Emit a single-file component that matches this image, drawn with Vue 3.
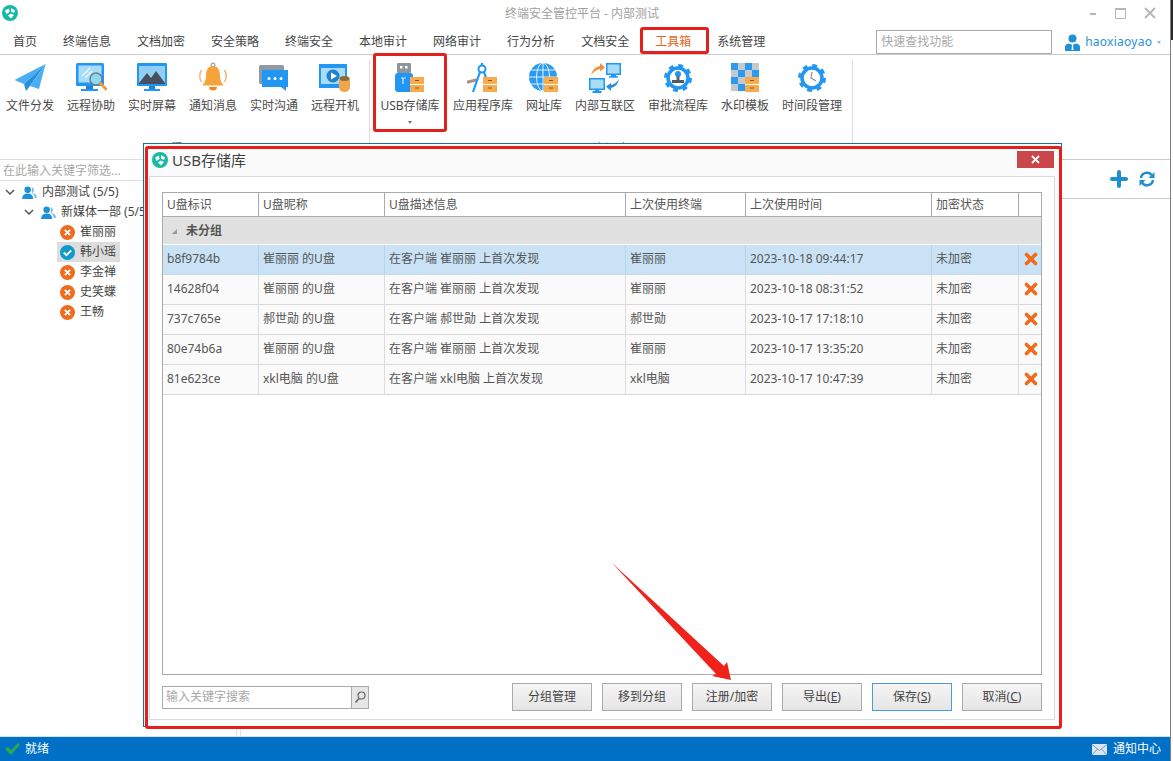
<script setup>
const tabs = ['首页', '终端信息', '文档加密', '安全策略', '终端安全', '本地审计', '网络审计', '行为分析', '文档安全', '工具箱', '系统管理']

const groupA = [
  { name: '文件分发', icon: 'plane' },
  { name: '远程协助', icon: 'assist' },
  { name: '实时屏幕', icon: 'screen' },
  { name: '通知消息', icon: 'bell' },
  { name: '实时沟通', icon: 'chat' },
  { name: '远程开机', icon: 'video' }
]
const groupB = [
  { name: 'USB存储库', icon: 'usb', drawer: true, more: true },
  { name: '应用程序库', icon: 'compass', drawer: true },
  { name: '网址库', icon: 'globe', drawer: true },
  { name: '内部互联区', icon: 'net' },
  { name: '审批流程库', icon: 'stamp' },
  { name: '水印模板', icon: 'checker', drawer: true },
  { name: '时间段管理', icon: 'clock' }
]

const people = [
  { name: '崔丽丽', ok: false },
  { name: '韩小瑶', ok: true },
  { name: '李金禅', ok: false },
  { name: '史笑蝶', ok: false },
  { name: '王畅', ok: false }
]

const columns = ['U盘标识', 'U盘昵称', 'U盘描述信息', '上次使用终端', '上次使用时间', '加密状态', '']
const rows = [
  { id: 'b8f9784b', user: '崔丽丽', time: '2023-10-18 09:44:17' },
  { id: '14628f04', user: '崔丽丽', time: '2023-10-18 08:31:52' },
  { id: '737c765e', user: '郝世勋', time: '2023-10-17 17:18:10' },
  { id: '80e74b6a', user: '崔丽丽', time: '2023-10-17 13:35:20' },
  { id: '81e623ce', user: 'xkl电脑', time: '2023-10-17 10:47:39' }
]
const checkerCells = []
for (let r = 0; r < 4; r++) {
  for (let c = 0; c < 4; c++) {
    checkerCells.push({ x: 2 + c * 7, y: 1 + r * 7, blue: (r + c) % 2 === 0 })
  }
}
</script>

<template>
  <div class="screen">
    <div class="win">
      <div class="titlebar">
        <svg class="logo" viewBox="0 0 16 16">
          <circle cx="8" cy="8" r="8" fill="#19b9a5" />
          <path d="M3 5.500 7 3.500 7.500 7 4.500 9ZM9 3 13 5.500 12 8 9 6.500ZM6 10.500 9 8.500 12 10 9 13.500Z" fill="#fff" />
        </svg>
        <span class="apptitle">终端安全管控平台 - 内部测试</span>
        <div class="winctl">
          <svg width="70" height="14" viewBox="0 0 70 14">
            <path d="M0 8H6" stroke="#b5b5b5" stroke-width="2" />
            <path d="M25.500 2.500H35.500V12.500H25.500Z" fill="none" stroke="#b5b5b5" />
            <path d="M25 3H36" stroke="#b5b5b5" stroke-width="2" />
            <path d="M55 2 65 12M65 2 55 12" stroke="#b5b5b5" stroke-width="1.800" />
          </svg>
        </div>
      </div>

      <div class="tabbar">
        <span v-for="t in tabs" :key="t" class="tab" :class="{ active: t === '工具箱' }">{{ t }}</span>
        <div class="quick">快速查找功能</div>
        <div class="user">
          <svg width="15" height="17" viewBox="0 0 15 17">
            <circle cx="7.500" cy="4.500" r="4" fill="#1f8fd8" />
            <path d="M0 17V13Q0 10 4 9.500L7.500 11 11 9.500Q15 10 15 13V17Z" fill="#1f8fd8" />
            <path d="M7 11H8L8.500 16H6.500Z" fill="#fff" />
          </svg>
          <span>haoxiaoyao</span>
          <i class="caret"></i>
        </div>
      </div>

      <div class="ribbon">
        <div v-for="(group, gi) in [groupA, groupB]" :key="gi" class="rgroup" :class="'rgroup' + gi">
          <div class="ritems">
            <div v-for="it in group" :key="it.name" class="ritem" :class="{ wide: it.more }">
              <svg class="ricon" viewBox="0 0 32 32">
                <template v-if="it.icon === 'plane'">
                  <path d="M31.500 2 .5 18 10 22Z" fill="#49aef2" />
                  <path d="M31.500 2 10 22 12 29 16 24Z" fill="#2690da" />
                  <path d="M31.500 2 16 24 25 27Z" fill="#49aef2" />
                </template>
                <template v-else-if="it.icon === 'assist'">
                  <rect x="1" y="1" width="28" height="23" rx="1.500" fill="#2196f3" />
                  <rect x="3.500" y="3.500" width="23" height="17" fill="#a9dcf7" />
                  <path d="M7 14 15 6M10 16 17 9" stroke="#e4f5fd" stroke-width="1.500" />
                  <rect x="11" y="24" width="7" height="3" fill="#1d82d2" />
                  <rect x="6" y="27" width="17" height="2" fill="#2196f3" />
                  <circle cx="21" cy="17" r="6" fill="#8fd8ee" stroke="#6a7f8c" stroke-width="1.500" />
                  <path d="M25.500 21.500 31 27" stroke="#f1974a" stroke-width="3" stroke-linecap="round" />
                </template>
                <template v-else-if="it.icon === 'screen'">
                  <rect x="1" y="1" width="30" height="23" rx="1" fill="#2196f3" />
                  <rect x="3" y="4" width="26" height="18" fill="#8fd0f2" />
                  <path d="M3 21 11 11 15 16 20 9 29 21V22H3Z" fill="#46505e" />
                  <rect x="13" y="24" width="6" height="3" fill="#1d82d2" />
                  <rect x="8" y="27" width="16" height="2" fill="#2196f3" />
                </template>
                <template v-else-if="it.icon === 'bell'">
                  <circle cx="16" cy="3" r="2" fill="none" stroke="#8a8a8a" />
                  <path d="M16 4C10.500 4 9 9 9 14 9 19 7 21 5.500 23.500H26.500C25 21 23 19 23 14 23 9 21.500 4 16 4Z" fill="#f7a33c" />
                  <path d="M12 25H20A4 3.500 0 0 1 12 25Z" fill="#f08a1d" />
                  <path d="M4.500 8Q1 14 4.500 20M27.500 8Q31 14 27.500 20" fill="none" stroke="#f3b77c" stroke-width="1.500" />
                </template>
                <template v-else-if="it.icon === 'chat'">
                  <rect x="1" y="3" width="25" height="19" rx="1.500" fill="#8f9aa3" />
                  <path d="M4 8H30V25H28V29L23 25H4Z" fill="#2196f3" />
                  <circle cx="11" cy="16.500" r="1.500" fill="#fff" />
                  <circle cx="17" cy="16.500" r="1.500" fill="#fff" />
                  <circle cx="23" cy="16.500" r="1.500" fill="#fff" />
                </template>
                <template v-else-if="it.icon === 'video'">
                  <rect x="0" y="2" width="28" height="24" fill="#2196f3" />
                  <rect x="2" y="6" width="24" height="16" fill="#a9dcf7" />
                  <circle cx="14" cy="14" r="6.500" fill="#1d82d2" />
                  <path d="M12 10.500 18 14 12 17.500Z" fill="#fff" />
                  <rect x="20" y="14" width="11" height="16" rx="5" fill="#f2a54b" />
                  <ellipse cx="25.500" cy="16.500" rx="5" ry="2.500" fill="#8c6a3e" />
                </template>
                <template v-else-if="it.icon === 'usb'">
                  <rect x="3" y="1" width="14" height="10" rx="1" fill="#8e969c" />
                  <rect x="6" y="4" width="2.500" height="2.500" fill="#fff" />
                  <rect x="11" y="4" width="2.500" height="2.500" fill="#fff" />
                  <path d="M1 14Q1 11 4 11H16Q19 11 19 14V30H4Q1 30 1 27Z" fill="#2196f3" />
                  <path d="M7 16H12M9 16V22" stroke="#cfeafb" stroke-width="1.200" />
                </template>
                <template v-else-if="it.icon === 'compass'">
                  <path d="M1 20 9 18" stroke="#a98f90" stroke-width="3" stroke-linecap="round" />
                  <circle cx="15" cy="7" r="3.500" fill="none" stroke="#2196f3" stroke-width="2" />
                  <path d="M15 1V4M13 10 6 30M17 10 22 24" stroke="#2196f3" stroke-width="2.200" />
                </template>
                <template v-else-if="it.icon === 'globe'">
                  <circle cx="15" cy="15" r="14" fill="#2b9af0" />
                  <path d="M1 15H29M3 8H27M3 22H27M15 1V29" stroke="#e2f3fd" stroke-width="1" />
                  <ellipse cx="15" cy="15" rx="6.500" ry="14" fill="none" stroke="#e2f3fd" />
                </template>
                <template v-else-if="it.icon === 'net'">
                  <rect x="17" y="1" width="15" height="12" fill="#2196f3" />
                  <rect x="18.500" y="2.500" width="12" height="9" fill="#a9dcf7" />
                  <path d="M22 13H27V15H22Z" fill="#2196f3" />
                  <path d="M20 15H29" stroke="#2196f3" stroke-width="1.500" />
                  <rect x="0" y="16" width="16" height="12" fill="#2196f3" />
                  <rect x="1.500" y="17.500" width="13" height="9" fill="#a9dcf7" />
                  <path d="M3.500 30H12.500M6 28H10" stroke="#2196f3" stroke-width="2" />
                  <path d="M2 13Q4 5 11 4V1L16 5.500 11 9.500V7Q6 8 2 13Z" fill="#f1913a" />
                  <path d="M30 17Q29 24 22 26V29L17 24.500 22 21V23Q27 22 30 17Z" fill="#2b8fdc" />
                </template>
                <template v-else-if="it.icon === 'stamp'">
                  <circle cx="16" cy="16" r="12.500" fill="none" stroke="#2196f3" stroke-width="3" stroke-dasharray="4.800 5" />
                  <circle cx="16" cy="16" r="10" fill="#fff" stroke="#2196f3" stroke-width="3.500" />
                  <circle cx="16" cy="12" r="3" fill="#2196f3" />
                  <path d="M14.500 14H17.500V18H14.500Z" fill="#5a6b78" />
                  <rect x="10" y="18" width="12" height="3" fill="#4a5a68" />
                </template>
                <template v-else-if="it.icon === 'checker'">
                  <rect
                    v-for="(cell, ci) in checkerCells"
                    :key="ci"
                    :x="cell.x"
                    :y="cell.y"
                    width="7"
                    height="7"
                    :fill="cell.blue ? '#2b9af0' : '#c6c9cc'"
                  />
                </template>
                <template v-else-if="it.icon === 'clock'">
                  <circle cx="16" cy="16" r="12.500" fill="none" stroke="#2196f3" stroke-width="3" stroke-dasharray="4.800 5" />
                  <circle cx="16" cy="16" r="10" fill="#fff" stroke="#2196f3" stroke-width="3.500" />
                  <path d="M16 10 15 16 20 19" fill="none" stroke="#8a8f94" stroke-width="1.200" />
                </template>
                <g v-if="it.drawer">
                  <rect x="16" y="15" width="14" height="15" fill="#f5ab4e" />
                  <path d="M16 22.500H30" stroke="#fff" />
                  <path d="M21 18.500H25M21 26H25" stroke="#8a5a20" stroke-width="1.200" />
                </g>
              </svg>
              <span class="rlabel">{{ it.name }}</span>
              <i v-if="it.more" class="caret dark"></i>
            </div>
          </div>
          <div class="glabel">{{ gi === 0 ? '远程工具' : '资源库' }}</div>
        </div>
      </div>

      <div class="main">
        <div class="tree">
          <div class="filter">在此输入关键字筛选...</div>
          <div class="node lvl0">
            <svg class="chev" viewBox="0 0 10 6"><path d="M1 1 5 5 9 1" fill="none" stroke="#555" stroke-width="1.500" /></svg>
            <svg class="grp" viewBox="0 0 16 14"><circle cx="6" cy="4" r="3.500" fill="#1f8fd8" /><path d="M0 14Q0 8 6 8 12 8 12 14Z" fill="#1f8fd8" /><path d="M10.500 1.200A3.500 3.500 0 0 1 11 7.500Q16 8 16 13H13.500Q13.500 9 10.500 7.500Z" fill="#7cbce8" /></svg>
            <span>内部测试 (5/5)</span>
          </div>
          <div class="node lvl1">
            <svg class="chev" viewBox="0 0 10 6"><path d="M1 1 5 5 9 1" fill="none" stroke="#555" stroke-width="1.500" /></svg>
            <svg class="grp" viewBox="0 0 16 14"><circle cx="6" cy="4" r="3.500" fill="#1f8fd8" /><path d="M0 14Q0 8 6 8 12 8 12 14Z" fill="#1f8fd8" /><path d="M10.500 1.200A3.500 3.500 0 0 1 11 7.500Q16 8 16 13H13.500Q13.500 9 10.500 7.500Z" fill="#7cbce8" /></svg>
            <span>新媒体一部 (5/5)</span>
          </div>
          <div v-for="p in people" :key="p.name" class="node lvl2">
            <div class="person" :class="{ sel: p.ok }">
              <svg width="15" height="15" viewBox="0 0 14 14">
                <circle cx="7" cy="7" r="7" :fill="p.ok ? '#0f9ac9' : '#f26a1b'" />
                <path v-if="p.ok" d="M3.500 7 6 9.500 10.500 5" fill="none" stroke="#fff" stroke-width="1.800" />
                <path v-else d="M4.500 4.500 9.500 9.500M9.500 4.500 4.500 9.500" stroke="#fff" stroke-width="1.800" />
              </svg>
              <span>{{ p.name }}</span>
            </div>
          </div>
        </div>
        <div class="content">
          <div class="chead">
            <svg width="18" height="18" viewBox="0 0 18 18"><path d="M9 2V16M2 9H16" stroke="#1f8fd0" stroke-width="4" stroke-linecap="round" /></svg>
            <svg width="16" height="16" viewBox="0 0 16 16">
              <path d="M2 7A6 6 0 0 1 13 4.500" fill="none" stroke="#1f8fd0" stroke-width="2.400" />
              <path d="M15.500 1V7H9.500Z" fill="#1f8fd0" />
              <path d="M14 9A6 6 0 0 1 3 11.500" fill="none" stroke="#1f8fd0" stroke-width="2.400" />
              <path d="M.5 15V9H6.500Z" fill="#1f8fd0" />
            </svg>
          </div>
        </div>
      </div>

      <div class="status">
        <svg width="15" height="12" viewBox="0 0 15 12"><path d="M0 6 3 4 6 7 13 0 15 1.500 6 12Z" fill="#2fa84f" /></svg>
        <span class="ready">就绪</span>
        <svg class="mail" width="15" height="11" viewBox="0 0 15 11">
          <rect width="15" height="11" fill="#d9e6f0" />
          <path d="M0 .5 7.500 6.500 15 .5M0 11 5.500 5M15 11 9.500 5" fill="none" stroke="#7f9db5" />
        </svg>
        <span>通知中心</span>
      </div>
    </div>
    <div class="edge"><i></i></div>

    <div class="dialog">
      <div class="dhead">
        <svg class="dlogo" viewBox="0 0 16 16">
          <circle cx="8" cy="8" r="8" fill="#19b9a5" />
          <path d="M3 5.500 7 3.500 7.500 7 4.500 9ZM9 3 13 5.500 12 8 9 6.500ZM6 10.500 9 8.500 12 10 9 13.500Z" fill="#fff" />
        </svg>
        <span class="dtitle">USB存储库</span>
        <div class="dclose">
          <svg width="9" height="9" viewBox="0 0 9 9"><path d="M1 1 8 8M8 1 1 8" stroke="#fff" stroke-width="1.800" /></svg>
        </div>
      </div>
      <div class="dbody">
        <div class="frame">
          <table>
            <colgroup>
              <col style="width: 96px" />
              <col style="width: 126px" />
              <col style="width: 241px" />
              <col style="width: 120px" />
              <col style="width: 186px" />
              <col style="width: 87px" />
              <col style="width: 22px" />
            </colgroup>
            <thead>
              <tr>
                <th v-for="(c, i) in columns" :key="i">{{ c }}</th>
              </tr>
            </thead>
            <tbody>
              <tr class="grouprow">
                <td colspan="7"><i class="tri"></i>未分组</td>
              </tr>
              <tr v-for="(r, i) in rows" :key="r.id" :class="{ first: i === 0 }">
                <td>{{ r.id }}</td>
                <td>{{ r.user }} 的U盘</td>
                <td>在客户端 {{ r.user }} 上首次发现</td>
                <td>{{ r.user }}</td>
                <td>{{ r.time }}</td>
                <td>未加密</td>
                <td class="del">
                  <svg width="14" height="14" viewBox="0 0 14 14"><path d="M2.500 2.500 11.500 11.500M11.500 2.500 2.500 11.500" stroke="#f26a1b" stroke-width="3.600" stroke-linecap="round" /></svg>
                </td>
              </tr>
            </tbody>
          </table>
        </div>
        <div class="dfoot">
          <div class="search">
            <span class="ph">输入关键字搜索</span>
            <div class="sbtn">
              <svg width="12" height="13" viewBox="0 0 12 13"><circle cx="7.500" cy="4.500" r="3.500" fill="none" stroke="#666" stroke-width="1.200" /><path d="M5 7.500 1.500 11.500" stroke="#666" stroke-width="1.600" /></svg>
            </div>
          </div>
          <div class="btns">
            <button type="button">分组管理</button>
            <button type="button">移到分组</button>
            <button type="button">注册/加密</button>
            <button type="button">导出(<u>E</u>)</button>
            <button type="button" class="primary">保存(<u>S</u>)</button>
            <button type="button">取消(<u>C</u>)</button>
          </div>
        </div>
      </div>
    </div>

    <!-- 截图上的红色标注 -->
    <div class="mark mark-tab"></div>
    <div class="mark mark-usb"></div>
    <div class="mark mark-dialog"></div>
    <svg class="arrow" width="1173" height="761" viewBox="0 0 1173 761">
      <path d="M612 563 724 666 727 662 731 680 712 676 716 674Z" fill="#f0231c" />
    </svg>
  </div>
</template>

<style scoped>
.screen {
  position: relative;
  width: 1173px;
  height: 761px;
  display: flex;
  overflow: hidden;
  background: #fff;
  color: #555;
  font-family: "Noto Sans", "Noto Sans CJK SC", sans-serif;
  font-size: 12px;
  line-height: 16px;
}
.win {
  flex: 1;
  display: flex;
  flex-direction: column;
  min-width: 0;
}
.edge {
  width: 3px;
  background: #fff;
  border-left: 1px solid #808080;
  box-sizing: border-box;
}
.edge i {
  display: block;
  height: 40px;
  background: #2a2a2a;
}

.titlebar {
  height: 27px;
  position: relative;
  display: flex;
  align-items: center;
  justify-content: center;
  flex: none;
}
.logo {
  position: absolute;
  left: 2px;
  top: 5px;
  width: 16px;
  height: 16px;
}
.apptitle {
  color: #a0a0a0;
  position: relative;
  left: -3px;
}
.winctl {
  position: absolute;
  right: 10px;
  top: 6px;
  line-height: 0;
}

.tabbar {
  height: 28px;
  flex: none;
  display: flex;
  align-items: center;
  border-bottom: 1px solid #ccc;
  box-sizing: border-box;
  padding-top: 3px;
  white-space: nowrap;
}
.tab {
  flex: none;
  padding: 0 13px;
  color: #444;
}
.tab.active {
  color: #e8641b;
}
.quick {
  flex: none;
  margin-left: 98px;
  width: 176px;
  height: 24px;
  box-sizing: border-box;
  border: 1px solid #aaa;
  padding: 3px 4px;
  color: #a8a8a8;
}
.user {
  flex: none;
  margin-left: 13px;
  display: flex;
  align-items: center;
  gap: 5px;
  color: #2a8fd8;
  font-size: 12px;
  letter-spacing: 0.25px;
}
.caret {
  display: inline-block;
  width: 0;
  height: 0;
  border: 2.500px solid transparent;
  border-top: 3px solid #7cbce8;
  border-bottom: 0;
}
.caret.dark {
  border-top-color: #777;
  margin-top: 7px;
}

.ribbon {
  height: 104px;
  flex: none;
  display: flex;
}
.rgroup {
  display: flex;
  flex-direction: column;
  align-items: stretch;
  margin-top: 5px;
  border-right: 1px solid #ddd;
  box-sizing: border-box;
}
.rgroup0 {
  width: 370px;
  padding-left: 6px;
}
.rgroup1 {
  width: 483px;
  padding-left: 10px;
}
.ritems {
  display: flex;
  gap: 13px;
  height: 81px;
}
.ritem {
  display: flex;
  flex-direction: column;
  align-items: center;
}
.ritem.wide {
  min-width: 60px;
}
.ricon {
  width: 32px;
  height: 32px;
  margin-top: 2px;
}
.rlabel {
  margin-top: 4px;
  white-space: nowrap;
  color: #4a4a4a;
}
/* 组名大部分被对话框盖住，只露出顶部几个像素 */
.glabel {
  height: 4px;
  overflow: hidden;
  text-align: center;
  color: #666;
  padding-right: 10px;
}

.main {
  flex: 1;
  display: flex;
  gap: 4px;
  min-height: 0;
}
.tree {
  width: 236px;
  flex: none;
  border-right: 1px solid #e2e2e2;
  box-sizing: content-box;
  margin-right: -1px;
}
.filter {
  height: 22px;
  box-sizing: border-box;
  border-top: 1px solid #ddd;
  border-bottom: 1px solid #ddd;
  padding: 3px 3px;
  color: #a8a8a8;
  margin-bottom: 1px;
}
.node {
  height: 20px;
  display: flex;
  align-items: center;
  white-space: nowrap;
  color: #444;
}
.lvl0 {
  padding-left: 5px;
}
.lvl1 {
  padding-left: 24px;
}
.lvl2 {
  padding-left: 57px;
}
.chev {
  width: 10px;
  height: 6px;
  margin-right: 7px;
}
.grp {
  width: 15px;
  height: 13px;
  margin-right: 5px;
}
.person {
  display: flex;
  align-items: center;
  gap: 5px;
  padding: 0 3px;
  height: 20px;
  width: 63px;
  box-sizing: border-box;
}
.person.sel {
  background: #ddd;
}
.content {
  flex: 1;
  border-left: 1px solid #e2e2e2;
}
.chead {
  height: 40px;
  box-sizing: border-box;
  border-top: 1px solid #ccc;
  border-bottom: 1px solid #ccc;
  display: flex;
  align-items: center;
  justify-content: flex-end;
  gap: 11px;
  padding-right: 15px;
}

.status {
  height: 25px;
  flex: none;
  background: #0070c6;
  border-top: 1px solid #cfe3f3;
  box-sizing: border-box;
  display: flex;
  align-items: center;
  padding: 0 9px 0 5px;
  color: #fff;
}
.ready {
  margin-left: 5px;
  flex: 1;
}
.mail {
  margin-right: 6px;
}

.dialog {
  position: absolute;
  left: 143px;
  top: 143px;
  width: 919px;
  height: 584px;
  box-sizing: border-box;
  border: 1px solid #1a6f9e;
  background: #fbfbfb;
  display: flex;
  flex-direction: column;
}
.dhead {
  height: 32px;
  flex: none;
  position: relative;
  display: flex;
  align-items: center;
  padding-left: 8px;
}
.dlogo {
  width: 16px;
  height: 16px;
}
.dtitle {
  margin-left: 4px;
  font-size: 15px;
  color: #444;
}
.dclose {
  position: absolute;
  right: 7px;
  top: 7px;
  width: 37px;
  height: 17px;
  background: #c9474a;
  display: flex;
  align-items: center;
  justify-content: center;
}
.dbody {
  flex: 1;
  margin: 0 6px 6px 5px;
  border: 1px solid #d5dbdf;
  background: #fff;
  padding: 15px 12px 10px 12px;
  display: flex;
  flex-direction: column;
  min-height: 0;
}
.frame {
  height: 483px;
  flex: none;
  box-sizing: border-box;
  border: 1px solid #aaa;
  background: #fff;
}
table {
  width: 878px;
  table-layout: fixed;
  border-collapse: separate;
  border-spacing: 0;
  font-size: 12px;
}
th {
  height: 24px;
  box-sizing: border-box;
  font-weight: normal;
  text-align: left;
  padding: 0 4px;
  color: #555;
  border-right: 1px solid #aaa;
  border-bottom: 1px solid #aaa;
}
th:last-child {
  border-right: 0;
}
td {
  height: 30px;
  box-sizing: border-box;
  padding: 0 4px 2px;
  color: #555;
  background: #fafafa;
  border-right: 1px solid #dcdcdc;
  border-bottom: 1px solid #d8d8d8;
  white-space: nowrap;
}
td:last-child {
  border-right: 0;
}
.grouprow td {
  height: 28px;
  background: #e1e1e1;
  border-right: 0;
  border-bottom: 1px solid #fff;
  font-weight: 700;
  padding: 0 0 0 9px;
  color: #555;
}
.tri {
  display: inline-block;
  width: 0;
  height: 0;
  margin-right: 9px;
  border-left: 5px solid transparent;
  border-bottom: 5px solid #999;
  vertical-align: 1px;
}
tr.first td {
  background: #c9e2f5;
  border-right-color: #b9d4e8;
  border-bottom-color: #c4d8e6;
}
td.del {
  padding: 0 0 1px 2px;
  text-align: center;
  line-height: 0;
}
.dfoot {
  display: flex;
  align-items: center;
  justify-content: space-between;
  margin-top: 8px;
}
.search {
  width: 207px;
  height: 23px;
  box-sizing: border-box;
  border: 1px solid #aaa;
  display: flex;
  background: #fff;
}
.ph {
  flex: 1;
  color: #a8a8a8;
  padding: 2px 3px;
}
.sbtn {
  width: 16px;
  background: #e6e6e6;
  border-left: 1px solid #aaa;
  display: flex;
  align-items: center;
  justify-content: center;
}
.btns {
  display: flex;
  gap: 10px;
}
button {
  width: 80px;
  height: 28px;
  padding: 0;
  border: 1px solid #aaa;
  background: linear-gradient(#f5f5f5, #e5e5e5);
  color: #444;
  font: inherit;
}
button.primary {
  border-color: #4d9bd8;
}

.mark {
  position: absolute;
  box-sizing: border-box;
  border: 3px solid #e3201b;
  border-radius: 3px;
  pointer-events: none;
}
.mark-tab {
  left: 640px;
  top: 27px;
  width: 69px;
  height: 27px;
}
.mark-usb {
  left: 373px;
  top: 53px;
  width: 74px;
  height: 79px;
}
.mark-dialog {
  left: 145px;
  top: 146px;
  width: 917px;
  height: 583px;
}
.arrow {
  position: absolute;
  left: 0;
  top: 0;
  pointer-events: none;
}
</style>

<style>
html,
body {
  margin: 0;
  overflow: hidden;
  background: #fff;
}
</style>
